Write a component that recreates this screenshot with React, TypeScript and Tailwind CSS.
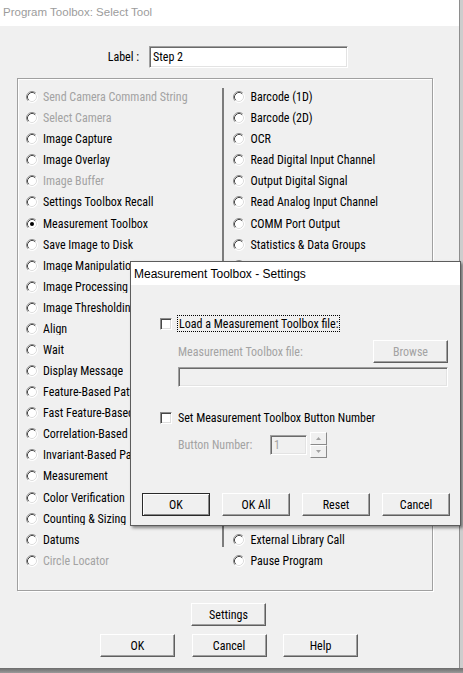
import React from "react";

// [label, enabled]
const LEFT_TOOLS: [string, boolean][] = [
  ["Send Camera Command String", false],
  ["Select Camera", false],
  ["Image Capture", true],
  ["Image Overlay", true],
  ["Image Buffer", false],
  ["Settings Toolbox Recall", true],
  ["Measurement Toolbox", true],
  ["Save Image to Disk", true],
  ["Image Manipulation", true],
  ["Image Processing", true],
  ["Image Thresholding", true],
  ["Align", true],
  ["Wait", true],
  ["Display Message", true],
  ["Feature-Based Pattern Matching", true],
  ["Fast Feature-Based Pattern Matching", true],
  ["Correlation-Based Pattern Matching", true],
  ["Invariant-Based Pattern Matching", true],
  ["Measurement", true],
  ["Color Verification", true],
  ["Counting & Sizing", true],
  ["Datums", true],
  ["Circle Locator", false],
];

// rows 9..21 sit behind the settings dialog
const RIGHT_TOOLS: [string, boolean][] = [
  ["Barcode (1D)", true],
  ["Barcode (2D)", true],
  ["OCR", true],
  ["Read Digital Input Channel", true],
  ["Output Digital Signal", true],
  ["Read Analog Input Channel", true],
  ["COMM Port Output", true],
  ["Statistics & Data Groups", true],
  ...Array.from({ length: 13 }, () => ["", true] as [string, boolean]),
  ["External Library Call", true],
  ["Pause Program", true],
];

function Radio({ checked }: { checked?: boolean }) {
  return (
    <svg width="12" height="12" viewBox="0 0 12 12" className="shrink-0">
      <circle cx="6" cy="6" r="5.5" fill="#fff" />
      <path d="M2.11 9.89A5.5 5.5 0 0 1 9.89 2.11" fill="none" stroke="#8c8c8c" />
      <path d="M2.82 9.18A4.5 4.5 0 0 1 9.18 2.82" fill="none" stroke="#474747" />
      <path d="M9.89 2.11A5.5 5.5 0 0 1 2.11 9.89" fill="none" stroke="#ffffff" />
      <path d="M9.18 2.82A4.5 4.5 0 0 1 2.82 9.18" fill="none" stroke="#dedede" />
      {checked && <circle cx="6" cy="6" r="2" fill="#000" />}
    </svg>
  );
}

function Checkbox() {
  return (
    <div className="w-[12px] h-[12px] shrink-0 bg-white border border-t-[#8c8c8c] border-l-[#8c8c8c] border-r-white border-b-white shadow-[inset_1px_1px_0_#474747,inset_-1px_-1px_0_#dedede]" />
  );
}

function Button({
  label,
  w,
  disabled,
  isDefault,
}: {
  label: string;
  w: string;
  disabled?: boolean;
  isDefault?: boolean;
}) {
  return (
    <div
      className={`${w} h-[23px] shrink-0 flex items-center justify-center bg-[#f0f0f0] ${
        isDefault
          ? "border border-[#2a2a2a] shadow-[inset_1px_1px_0_#fff,inset_-1px_-1px_0_#8a8a8a]"
          : "border border-t-white border-l-white border-r-[#5f5f5f] border-b-[#5f5f5f] shadow-[inset_-1px_-1px_0_#a0a0a0]"
      } ${disabled ? "text-[#a3a3a3]" : "text-black"}`}
    >
      {label}
    </div>
  );
}

const sunken =
  "border border-t-[#a0a0a0] border-l-[#a0a0a0] border-r-white border-b-white shadow-[inset_1px_1px_0_#6a6a6a,inset_-1px_-1px_0_#e3e3e3]";

export default function App() {
  return (
    <div className="w-[463px] h-[673px] overflow-hidden relative bg-[#c4c4c4] text-[12px] leading-none font-['Roboto_Condensed',Roboto,sans-serif] font-stretch-condensed">
      <div className="flex">
        {/* main window */}
        <div className="w-[459px] h-[668px] bg-[#f0f0f0] flex flex-col">
          <div className="h-[26px] bg-white flex items-center pl-[3px] text-[11.5px] text-[#9c9c9c] font-['Liberation_Sans',sans-serif] font-stretch-normal">
            Program Toolbox: Select Tool
          </div>

          <div className="flex items-center mt-[20px] h-[22px]">
            <span className="w-[139px] text-right">Label :</span>
            <div className={`ml-[10px] w-[199px] h-[22px] bg-white flex items-center pl-[3px] ${sunken}`}>Step 2</div>
          </div>

          {/* tool group */}
          <div className="ml-[17px] mt-[10px] w-[416px] h-[513px] flex border border-[#a0a0a0] shadow-[inset_1px_1px_0_#fff,1px_1px_0_#fff]">
            <div className="w-[204px] pt-[7.5px] pl-[8px]">
              {LEFT_TOOLS.map(([name, enabled], i) => (
                <div key={name} className="h-[21.09px] flex items-center gap-[5px] whitespace-nowrap">
                  <Radio checked={name === "Measurement Toolbox"} />
                  <span
                    className={`${enabled ? "text-black" : "text-[#a3a3a3]"} ${
                      i >= 8 && i <= 20 ? "max-w-[87px] overflow-hidden" : ""
                    }`}
                  >
                    {name}
                  </span>
                </div>
              ))}
            </div>
            <div className="w-[2px] h-[459px] mt-[9px] bg-[#7c7c7c]" />
            <div className="flex-1 pt-[7.5px] pl-[8.5px]">
              {RIGHT_TOOLS.map(([name, enabled], i) => (
                <div key={i} className="h-[21.09px] flex items-center gap-[6px] whitespace-nowrap">
                  <Radio />
                  {name && <span className={enabled ? "text-black" : "text-[#a3a3a3]"}>{name}</span>}
                </div>
              ))}
            </div>
          </div>

          <div className="flex mt-[12px] ml-[191px]">
            <Button label="Settings" w="w-[75px]" />
          </div>
          <div className="flex mt-[8px] ml-[100px] gap-[16.5px]">
            <Button label="OK" w="w-[75px]" />
            <Button label="Cancel" w="w-[75px]" />
            <Button label="Help" w="w-[75px]" />
          </div>
        </div>
        <div className="flex-1 h-[668px] bg-[#cdcdcd] border-l border-[#8e8e8e]" />
      </div>
      <div className="h-[5px] bg-gradient-to-b from-[#6c6c6c] to-[#9a9a9a]" />

      {/* settings dialog */}
      <div className="absolute left-[130px] top-[261px] w-[331px] h-[265px] bg-[#f0f0f0] border border-[#5c5c5c] shadow-[2px_2px_3px_rgba(0,0,0,0.45)] flex flex-col">
        <div className="h-[23px] bg-white flex items-center pl-[3px] text-[12px] text-black font-['Liberation_Sans',sans-serif] font-stretch-normal">
          Measurement Toolbox - Settings
        </div>
        <div className="flex flex-col pl-[29px]">
          <div className="flex items-center h-[17px] mt-[30px]">
            <Checkbox />
            <span className="ml-[5px] h-[17px] flex items-center px-[1px] border border-dotted border-black">
              Load a Measurement Toolbox file:
            </span>
          </div>
          <div className="flex items-center justify-between ml-[18px] w-[270px] mt-[8px]">
            <span className="text-[#a3a3a3]">Measurement Toolbox file:</span>
            <Button label="Browse" w="w-[75px]" disabled />
          </div>
          <div className={`ml-[18px] mt-[4px] w-[270px] h-[20px] ${sunken}`} />
          <div className="flex items-center h-[17px] mt-[22px]">
            <Checkbox />
            <span className="ml-[6px]">Set Measurement Toolbox Button Number</span>
          </div>
          <div className="flex items-center h-[26px] mt-[6px] ml-[18px]">
            <span className="w-[92px] text-[#a3a3a3]">Button Number:</span>
            <div className={`w-[37px] h-[20px] flex items-center pl-[3px] text-[#a3a3a3] ${sunken}`}>1</div>
            <div className="ml-[3px] w-[17px] h-[26px] flex flex-col">
              <div className="h-[13px] flex items-center justify-center border border-t-white border-l-white border-r-[#8a8a8a] border-b-[#8a8a8a]">
                <svg width="5" height="3" viewBox="0 0 5 3">
                  <path d="M2.5 0L5 3H0z" fill="#a3a3a3" />
                </svg>
              </div>
              <div className="h-[13px] flex items-center justify-center border border-t-white border-l-white border-r-[#8a8a8a] border-b-[#8a8a8a]">
                <svg width="5" height="3" viewBox="0 0 5 3">
                  <path d="M0 0H5L2.5 3z" fill="#a3a3a3" />
                </svg>
              </div>
            </div>
          </div>
        </div>
        <div className="flex ml-[11px] mt-[35px] gap-[12px]">
          <Button label="OK" w="w-[68px]" isDefault />
          <Button label="OK All" w="w-[68px]" />
          <Button label="Reset" w="w-[68px]" />
          <Button label="Cancel" w="w-[68px]" />
        </div>
      </div>
    </div>
  );
}
